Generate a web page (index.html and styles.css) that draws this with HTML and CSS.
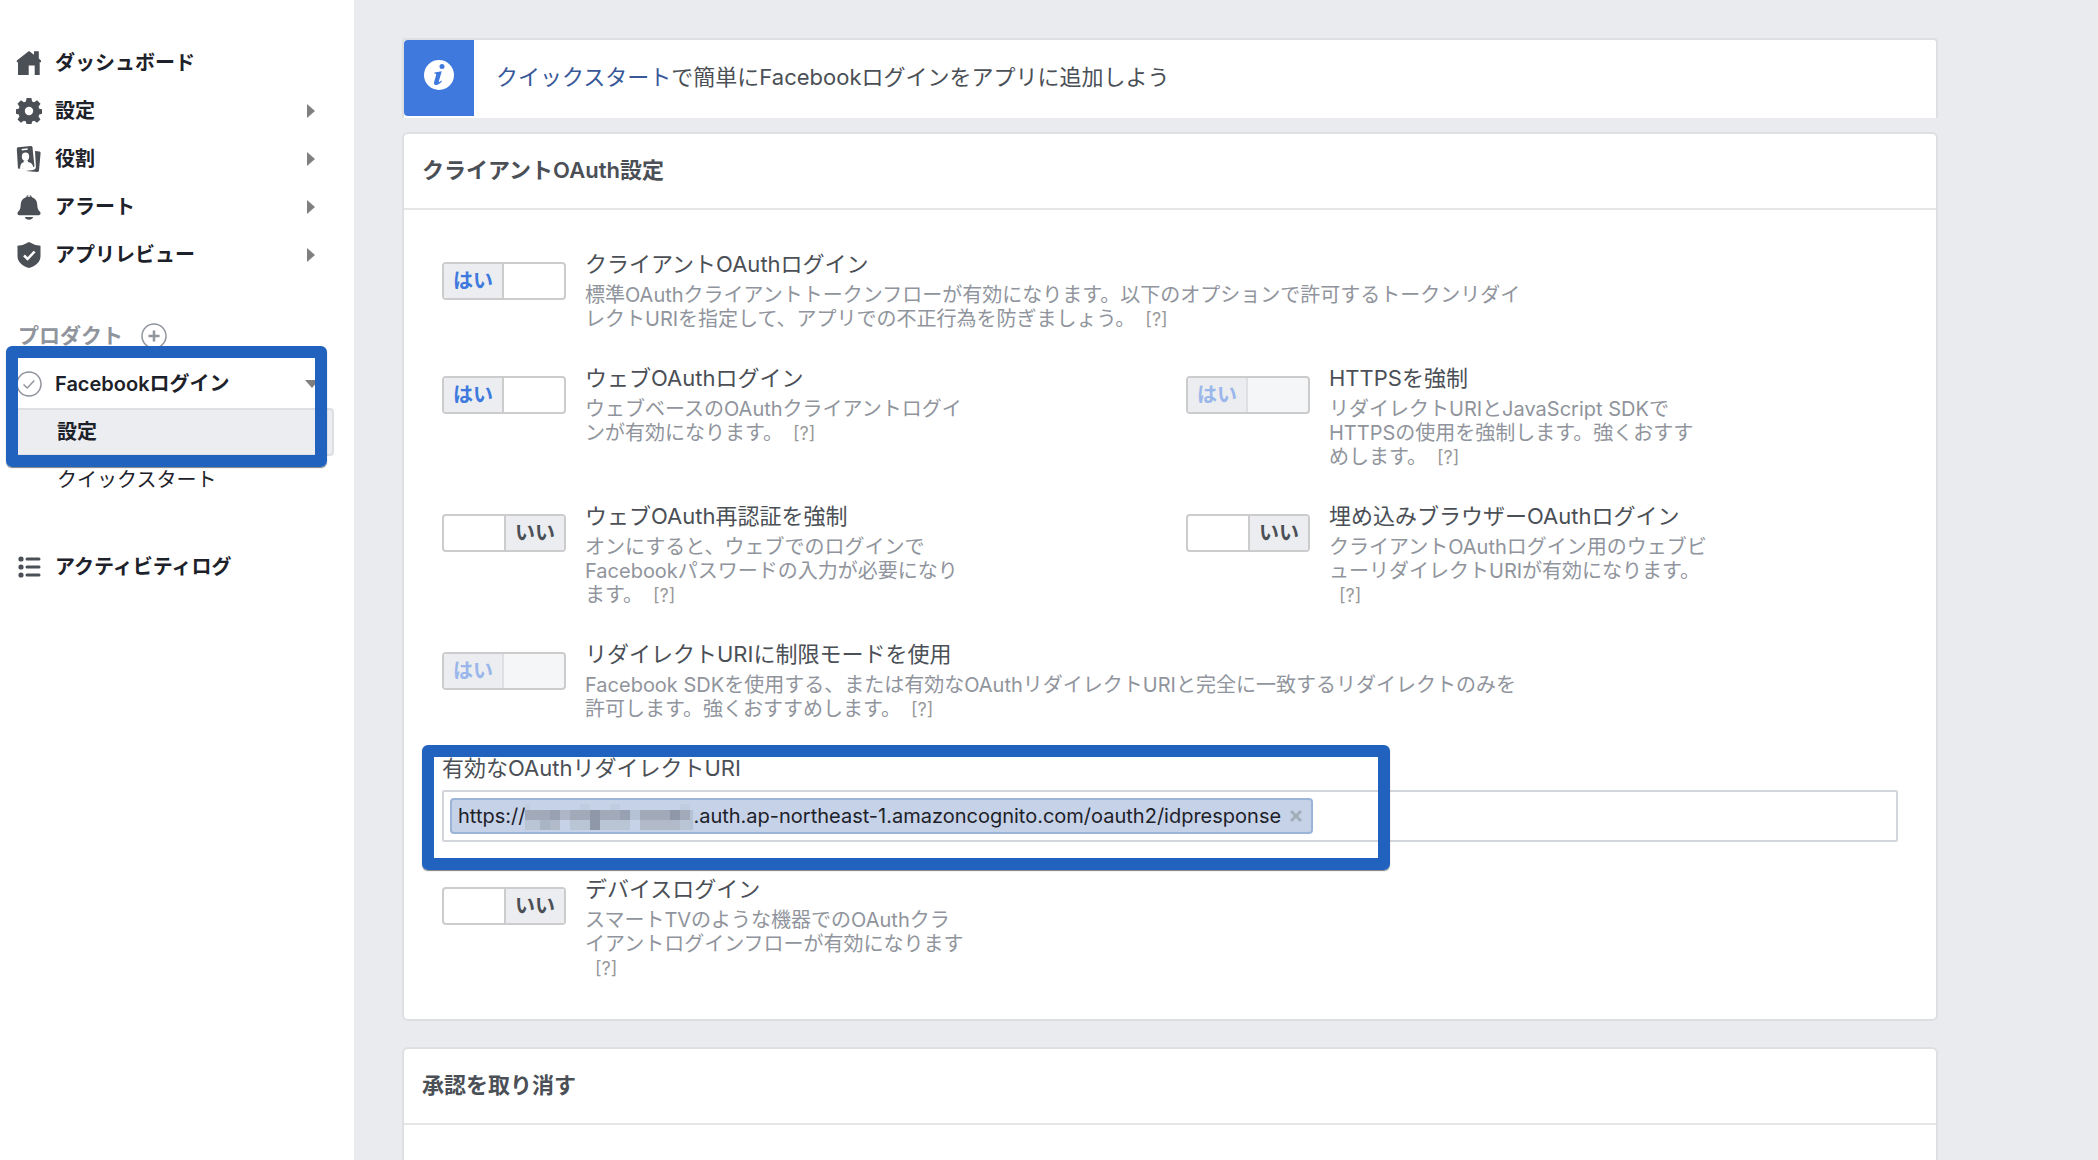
FILE: index.html
```html
<!DOCTYPE html>
<html lang="ja">
<head>
    <meta charset="utf-8">
    <title>Facebookログイン - 設定</title>
    <link rel="stylesheet" href="styles.css">
</head>
<body>
    <nav class="sidebar">
        <a class="nav-item" href="#">
            <svg class="icon" viewBox="0 0 26 26"><path d="M13 1 18 4.700V1.200h4.800v7.300L25 10.500v1.700h-1.300V25h-5v-9.500h-6V25H2V12.200H.8v-1.700z"/></svg>
            ダッシュボード
        </a>
        <a class="nav-item" href="#">
            <svg class="icon" viewBox="0 0 26 26"><path fill-rule="evenodd" d="M10.600 0h4.800l.7 3.500 2 .8 3-2 3.400 3.400-2 3 .8 2 3.200.6v4.400l-3.200.7-.8 2 2 3-3.400 3.400-3-2-2 .8-.7 2.900h-4.800l-.7-2.900-2-.8-3 2-3.400-3.400 2-3-.8-2L0 15.700v-4.400l2.700-.6.8-2-2-3 3.400-3.400 3 2 2-.8zM13 8.800a4.200 4.200 0 1 0 0 8.400 4.200 4.200 0 0 0 0-8.400z"/></svg>
            設定
            <span class="arrow"></span>
        </a>
        <a class="nav-item" href="#">
            <svg class="icon" viewBox="0 0 26 26"><path d="M2 1.300 15 0q1.300 0 1.500 1.200L18.400 20q0 1-.8 1.100L3 22.700q-1 0-1.100-1L.8 2.700q0-1.200 1.200-1.400z"/><path class="cut" d="M5.600 2.900l6-.6.200 1.500-6 .6z"/><ellipse class="cut" cx="9.500" cy="10.600" rx="3.700" ry="4.200"/><path class="cut" d="M4 23l.3-3q.4-3 3.200-3.700l.5-2h3.500l.6 1.700q3.500.5 4.500 3l.8 2.500z"/><path d="M19 5l4.500.5q1.200.2 1.100 1.400L23 24.500q-.2 1.500-1.500 1.400L9.500 24.900l7.500-.9q3-.4 2.900-3.200z"/></svg>
            役割
            <span class="arrow"></span>
        </a>
        <a class="nav-item" href="#">
            <svg class="icon" viewBox="0 0 26 26"><path fill-rule="evenodd" d="M10 3.200a3.100 3.100 0 0 1 6 0c4.500 1.600 5.200 5 5.400 9 .2 3 1.200 4.200 2.400 5.400 1.400 1.600.8 3.600-1 3.600H3.200c-1.800 0-2.400-2-1-3.600 1.200-1.200 2.200-2.400 2.400-5.400.2-4 .9-7.400 5.400-9zm1.600-.5h2.800a1.400 1.400 0 0 0-2.800 0z"/><path d="M8.800 23h8.400q-1 2.800-4.200 2.800T8.800 23z"/></svg>
            アラート
            <span class="arrow"></span>
        </a>
        <a class="nav-item" href="#">
            <svg class="icon" viewBox="0 0 26 26"><path d="M13 0q5 3.200 11.500 3.800V14c0 6-5 10-11.500 12C6.500 24 1.500 20 1.500 14V3.800Q8 3.200 13 0z"/><path class="check" d="M8 13.500l3.600 3.500 7-7.500"/></svg>
            アプリレビュー
            <span class="arrow"></span>
        </a>

        <div class="nav-heading">
            プロダクト
            <button class="add" type="button" aria-label="追加">
                <svg class="icon line" viewBox="0 0 26 26"><circle cx="13" cy="13" r="12"/><path class="plus" d="M13 7.500v11M7.500 13h11"/></svg>
            </button>
        </div>

        <div class="product">
            <a class="nav-item" href="#">
                <svg class="icon line" viewBox="0 0 26 26"><circle cx="13" cy="13" r="12"/><path d="M7.500 13.500l3.800 3.500 7-7.500"/></svg>
                Facebookログイン
                <span class="arrow down"></span>
            </a>
            <a class="sub-item selected" href="#">設定</a>
            <a class="sub-item" href="#">クイックスタート</a>
            <div class="marker"></div>
        </div>

        <a class="nav-item activity" href="#">
            <svg class="icon" viewBox="0 0 26 26"><circle cx="5" cy="5" r="2.600"/><circle cx="5" cy="13" r="2.600"/><circle cx="5" cy="21" r="2.600"/><path class="rule" d="M11 5h12M11 13h12M11 21h12"/></svg>
            アクティビティログ
        </a>
    </nav>

    <main class="content">
        <div class="banner">
            <div class="banner-icon">
                <svg viewBox="0 0 30 30"><circle cx="15" cy="15" r="15" fill="#fff"/><circle cx="18" cy="6.500" r="2.500"/><path d="M10.500 12.500l7.200-1.200-2.900 10.200q-.4 1.600 2.600-.9l.6.700q-3.500 4-6.200 3.800-2.400-.3-1.600-3.400l2-7q.3-1.100-1.900-1.200z"/></svg>
            </div>
            <p class="banner-text"><a href="#">クイックスタート</a>で簡単にFacebookログインをアプリに追加しよう</p>
        </div>

        <section class="card">
            <h2 class="card-title">クライアントOAuth設定</h2>
            <div class="card-body">
                <div class="option wide">
                    <button class="switch on" type="button" role="switch" aria-checked="true" aria-labelledby="client-login"><span>はい</span></button>
                    <div>
                        <h3 id="client-login">クライアントOAuthログイン</h3>
                        <p>標準OAuthクライアントトークンフローが有効になります。以下のオプションで許可するトークンリダイ<br>レクトURIを指定して、アプリでの不正行為を防ぎましょう。<a class="help" href="#">[?]</a></p>
                    </div>
                </div>
                <div class="option">
                    <button class="switch on" type="button" role="switch" aria-checked="true" aria-labelledby="web-login"><span>はい</span></button>
                    <div>
                        <h3 id="web-login">ウェブOAuthログイン</h3>
                        <p>ウェブベースのOAuthクライアントログイ<br>ンが有効になります。<a class="help" href="#">[?]</a></p>
                    </div>
                </div>
                <div class="option">
                    <button class="switch on" type="button" role="switch" aria-checked="true" aria-labelledby="https" disabled><span>はい</span></button>
                    <div>
                        <h3 id="https">HTTPSを強制</h3>
                        <p>リダイレクトURIとJavaScript SDKで<br>HTTPSの使用を強制します。強くおすす<br>めします。<a class="help" href="#">[?]</a></p>
                    </div>
                </div>
                <div class="option">
                    <button class="switch" type="button" role="switch" aria-checked="false" aria-labelledby="reauth"><span>いい</span></button>
                    <div>
                        <h3 id="reauth">ウェブOAuth再認証を強制</h3>
                        <p>オンにすると、ウェブでのログインで<br>Facebookパスワードの入力が必要になり<br>ます。<a class="help" href="#">[?]</a></p>
                    </div>
                </div>
                <div class="option">
                    <button class="switch" type="button" role="switch" aria-checked="false" aria-labelledby="embedded"><span>いい</span></button>
                    <div>
                        <h3 id="embedded">埋め込みブラウザーOAuthログイン</h3>
                        <p>クライアントOAuthログイン用のウェブビ<br>ューリダイレクトURIが有効になります。<br><a class="help" href="#">[?]</a></p>
                    </div>
                </div>
                <div class="option wide">
                    <button class="switch on" type="button" role="switch" aria-checked="true" aria-labelledby="strict" disabled><span>はい</span></button>
                    <div>
                        <h3 id="strict">リダイレクトURIに制限モードを使用</h3>
                        <p>Facebook SDKを使用する、または有効なOAuthリダイレクトURIと完全に一致するリダイレクトのみを<br>許可します。強くおすすめします。<a class="help" href="#">[?]</a></p>
                    </div>
                </div>
                <div class="field wide">
                    <label for="redirect-uri">有効なOAuthリダイレクトURI</label>
                    <div class="token-box">
                        <span class="token">https://<svg class="mosaic" viewBox="0 0 168 30" shape-rendering="crispEdges">
                            <path fill="#a2aaba" d="M0 9h165v10H0z"/>
                            <path fill="#b9c4d5" d="M0 19h165v10H0z"/>
                            <path fill="#98a1b2" d="M25 9h10v10H25zM95 9h10v10H95z"/>
                            <path fill="#adb5c7" d="M35 9h10v10H35z"/>
                            <path fill="#8f98a8" d="M65 9h10v20H65zM145 9h10v10h-10z"/>
                            <path fill="#b5c1d5" d="M105 9h10v10h-10zM165 9h4v20h-4z"/>
                            <path fill="#c6d2e7" d="M35 19h10v10H35zM105 19h10v10h-10z"/>
                            <path fill="#a9b4c4" d="M15 19h10v10H15z"/>
                            <path fill="#b0bac9" d="M25 19h10v10H25zM115 19h40v10h-40z"/>
                            <path fill="#c0ccdf" d="M0 3h5v6H0zM55 3h10v6H55zM85 3h10v6H85zM155 3h10v6h-10z"/>
                        </svg>.auth.ap-northeast-1.amazoncognito.com/oauth2/idpresponse<button class="remove" type="button" aria-label="削除"><svg viewBox="0 0 14 14"><path d="M2 2l10 10M12 2L2 12"/></svg></button></span>
                        <input id="redirect-uri" type="text">
                    </div>
                    <div class="marker"></div>
                </div>
                <div class="option wide">
                    <button class="switch" type="button" role="switch" aria-checked="false" aria-labelledby="device"><span>いい</span></button>
                    <div>
                        <h3 id="device">デバイスログイン</h3>
                        <p>スマートTVのような機器でのOAuthクラ<br>イアントログインフローが有効になります<br><a class="help" href="#">[?]</a></p>
                    </div>
                </div>
            </div>
        </section>

        <section class="card">
            <h2 class="card-title">承認を取り消す</h2>
            <div class="card-body"></div>
        </section>
    </main>
</body>
</html>
```
FILE: styles.css
```css
:root {
    --text: #4b4f56;
    --dark: #1d2129;
    --muted: #90949c;
    --blue: #4079de;
    --marker: #2062be;
    --page: #e9ebee;
    --border: #dddfe2;
}
* {
    box-sizing: border-box;
}
body {
    margin: 0;
    height: 100vh;
    display: flex;
    overflow: hidden;
    background: var(--page);
    color: var(--text);
    font-family: Inter, "Noto Sans CJK JP", sans-serif;
    font-size: 20px;
    line-height: 24px;
}
a {
    color: inherit;
    text-decoration: none;
}
h2, h3, p {
    margin: 0;
}
button {
    padding: 0;
    border: 0;
    background: none;
    font: inherit;
    cursor: pointer;
}
.sidebar {
    flex: none;
    width: 354px;
    padding-top: 39px;
    background: #fff;
    color: var(--dark);
}
.nav-item {
    display: flex;
    align-items: center;
    height: 48px;
    padding: 0 39px 0 16px;
    gap: 13px;
    font-weight: 600;
}
.icon {
    flex: none;
    display: block;
    width: 26px;
    height: 26px;
    fill: var(--text);
}
.icon.line {
    fill: none;
    stroke: var(--muted);
    stroke-width: 1.5;
}
.icon .cut {
    fill: #fff;
}
.icon .check {
    fill: none;
    stroke: #fff;
    stroke-width: 2.5;
}
.icon .plus {
    stroke-width: 2.5;
}
.icon .rule {
    stroke: var(--text);
    stroke-width: 3;
    stroke-linecap: round;
}
.arrow {
    margin-left: auto;
    border: 7px solid transparent;
    border-left: 8px solid #7f7f7f;
    border-right: 0;
}
.arrow.down {
    margin-right: -4px;
    border: 7px solid transparent;
    border-top: 8px solid #7f7f7f;
    border-bottom: 0;
}
.nav-heading {
    display: flex;
    align-items: center;
    gap: 18px;
    height: 48px;
    margin-top: 33px;
    padding-left: 18px;
    color: var(--muted);
    font-size: 21px;
    font-weight: 600;
}
.product {
    position: relative;
}
.sub-item {
    display: flex;
    align-items: center;
    height: 48px;
    margin: 0 20px 0 10px;
    padding-left: 45px;
    border: 2px solid transparent;
    border-radius: 4px;
}
.sub-item.selected {
    background: #ebedf0;
    border-color: var(--border);
    font-weight: 600;
}
.activity {
    margin-top: 39px;
}
/* hand-drawn frames over the parts to look at */
.marker {
    position: absolute;
    border: 12px solid var(--marker);
    border-radius: 6px;
    box-shadow: 0 1px 1px rgba(0, 0, 0, 0.5);
    pointer-events: none;
}
.product .marker {
    top: -14px;
    left: 6px;
    width: 321px;
    height: 121px;
}
.content {
    flex: 1;
    min-width: 0;
    padding: 38px 160px 0 48px;
}
.banner {
    display: flex;
    height: 80px;
    margin-bottom: 14px;
    background: #fff;
    border: 2px solid var(--border);
    border-bottom: 0;
    border-radius: 4px 4px 0 0;
}
.banner-icon {
    display: flex;
    justify-content: center;
    width: 70px;
    height: 76px;
    padding-top: 20px;
    background: var(--blue);
    border-radius: 4px 0 0 4px;
}
.banner-icon svg {
    width: 30px;
    height: 30px;
    fill: var(--blue);
}
.banner-text {
    padding: 25px 22px;
    font-size: 22px;
}
.banner-text a {
    color: #385898;
}
.card {
    margin-bottom: 26px;
    background: #fff;
    border: 2px solid var(--border);
    border-radius: 6px;
}
.card-title {
    height: 76px;
    padding: 24px 18px;
    border-bottom: 2px solid #e5e5e5;
    font-size: 22px;
    font-weight: 600;
}
.card-body {
    display: grid;
    grid-template-columns: 1fr 1fr;
    column-gap: 32px;
    row-gap: 32px;
    min-height: 120px;
    padding: 39px 38px;
}
.option {
    display: flex;
    align-items: flex-start;
    gap: 19px;
}
.option h3 {
    height: 30px;
    margin-bottom: 4px;
    font-size: 22px;
    font-weight: 400;
    line-height: 30px;
}
.option p {
    color: var(--muted);
    white-space: nowrap;
}
.wide {
    grid-column: 1 / -1;
}
.help {
    margin-left: 10px;
    color: #999;
    font-size: 18px;
    line-height: 18px;
}
.switch {
    flex: none;
    display: flex;
    justify-content: flex-end;
    width: 124px;
    height: 38px;
    margin-top: 13px;
    border: 2px solid #ccc;
    border-radius: 4px;
    background: #fff;
    color: var(--text);
    font-weight: 600;
}
.switch span {
    width: 60px;
    height: 34px;
    padding-top: 5px;
    border-left: 2px solid #ccc;
    background: #ebedf0;
}
.switch.on {
    justify-content: flex-start;
    color: var(--blue);
}
.switch.on span {
    border-left: 0;
    border-right: 2px solid #ccc;
}
.switch:disabled {
    background: #f5f6f7;
    color: #9ab6ea;
}
.switch.on:disabled span {
    border-color: var(--border);
}
.field {
    position: relative;
}
.field label {
    display: block;
    height: 30px;
    margin-bottom: 7px;
    font-size: 22px;
    line-height: 30px;
}
.token-box {
    display: flex;
    align-items: center;
    height: 52px;
    padding: 0 6px;
    border: 2px solid #d3d6db;
    border-radius: 2px;
}
.token-box input {
    flex: 1;
    min-width: 0;
    border: 0;
    outline: 0;
    font: inherit;
}
.token {
    display: flex;
    align-items: center;
    height: 36px;
    padding: 0 8px 0 6px;
    background: #c6d2e7;
    border: 2px solid #9cb4d8;
    border-radius: 4px;
    color: var(--dark);
}
.mosaic {
    width: 168px;
    height: 30px;
}
.remove {
    margin-left: 8px;
}
.remove svg {
    display: block;
    width: 14px;
    height: 14px;
    stroke: #a3adbb;
    stroke-width: 3;
}
.field .marker {
    top: -8px;
    left: -20px;
    width: 968px;
    height: 125px;
}
```
